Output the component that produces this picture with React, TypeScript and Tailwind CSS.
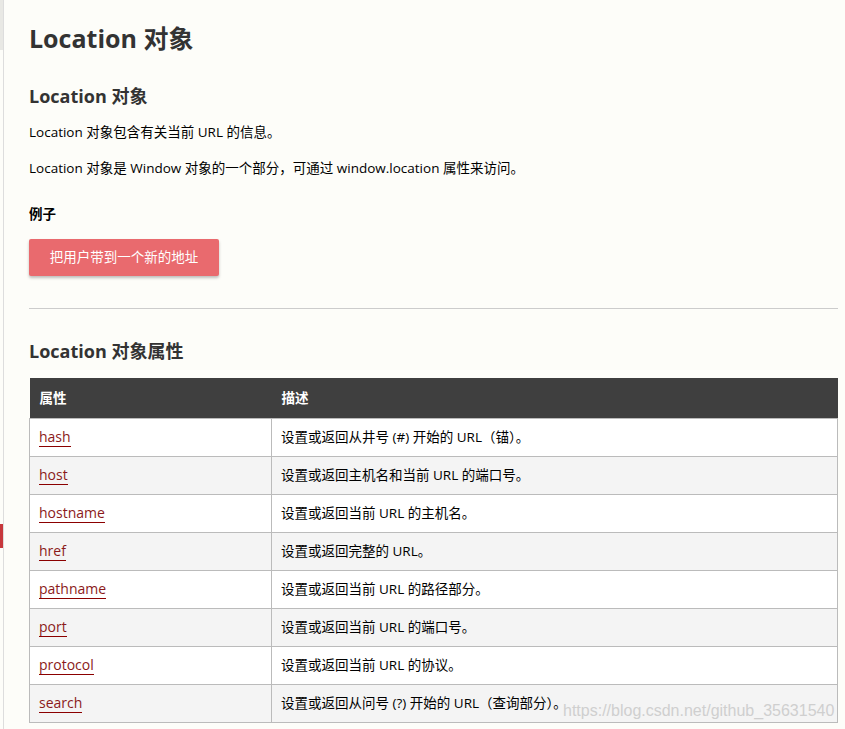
const rows: [string, string][] = [
  ['hash', '设置或返回从井号 (#) 开始的 URL（锚）。'],
  ['host', '设置或返回主机名和当前 URL 的端口号。'],
  ['hostname', '设置或返回当前 URL 的主机名。'],
  ['href', '设置或返回完整的 URL。'],
  ['pathname', '设置或返回当前 URL 的路径部分。'],
  ['port', '设置或返回当前 URL 的端口号。'],
  ['protocol', '设置或返回当前 URL 的协议。'],
  ['search', '设置或返回从问号 (?) 开始的 URL（查询部分）。'],
];

export default function App() {
  return (
    <div
      className="relative flex h-[729px] w-[845px] overflow-hidden bg-[#fdfdf9] text-[#333]"
      style={{ fontFamily: '"Open Sans", "Noto Sans CJK SC", sans-serif' }}
    >
      {/* sidebar edge */}
      <div className="flex w-[4px] shrink-0 flex-col border-r border-[#ddd]">
        <div className="h-[50px] bg-[#e8e8e4]" />
        <div className="h-[474px]" />
        <div className="h-[24px] bg-[#c7383c]" />
      </div>

      <div className="flex-1 pl-[25px] pr-[7px]">
        <h1 className="mt-[20px] text-[25px] font-bold leading-[36px]">Location 对象</h1>
        <h2 className="mt-[26px] text-[18px] font-bold leading-[28px]">Location 对象</h2>
        <p className="mt-[12px] text-[13.5px] leading-[20px] text-black">Location 对象包含有关当前 URL 的信息。</p>
        <p className="mt-[16px] text-[13.5px] leading-[20px] text-black">
          Location 对象是 Window 对象的一个部分，可通过 window.location 属性来访问。
        </p>
        <p className="mt-[26px] text-[13.5px] font-bold leading-[20px] text-black">例子</p>
        <button className="mt-[15px] h-[37px] w-[190px] rounded-[2px] bg-[#e96a6e] text-[13.5px] text-white shadow-[0_2px_3px_rgba(0,0,0,0.25)]">
          把用户带到一个新的地址
        </button>
        <hr className="mt-[32px] border-[#ccc]" />
        <h2 className="mt-[28px] text-[18px] font-bold leading-[28px]">Location 对象属性</h2>
        <table className="mt-[13px] w-full border-collapse text-[13.5px]">
          <thead>
            <tr className="h-[40px] bg-[#3f3f3f] text-left text-white">
              <th className="w-[242px] pl-[10px] font-bold">属性</th>
              <th className="pl-[10px] font-bold">描述</th>
            </tr>
          </thead>
          <tbody>
            {rows.map(([k, v], i) => (
              <tr key={k} className={`h-[38px] ${i % 2 ? 'bg-[#f4f4f4]' : 'bg-white'}`}>
                <td className="border border-[#bbb] pl-[9px]">
                  <span className="border-b border-[#8b0000] text-[14px] leading-[17px] text-[#8b1a1a]">{k}</span>
                </td>
                <td className="border border-[#bbb] pl-[9px] text-black">{v}</td>
              </tr>
            ))}
          </tbody>
        </table>
      </div>

      <div className="pointer-events-none absolute left-[563px] top-[699px] text-[16px] text-[#cfcfcf]" style={{ fontFamily: '"Liberation Sans", sans-serif' }}>
        https://blog.csdn.net/github_35631540
      </div>
    </div>
  );
}
